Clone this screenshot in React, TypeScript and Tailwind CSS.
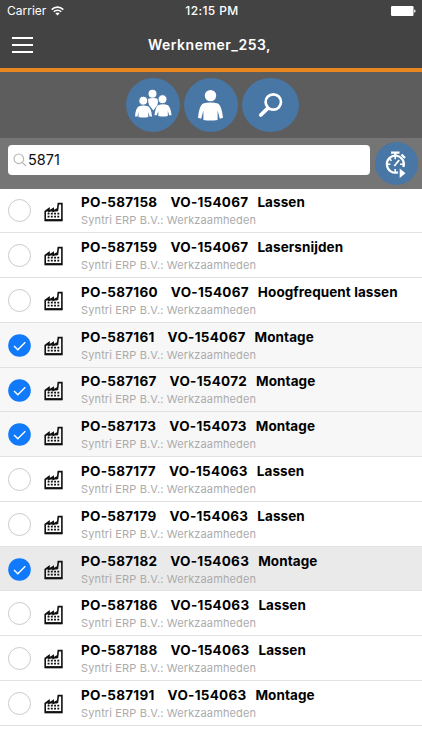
import clsx from "clsx";

type Order = {
    po: string;
    vo: string;
    task: string;
    state?: "selected" | "pressed";
};

const orders: Order[] = [
    { po: "PO-587158", vo: "VO-154067", task: "Lassen" },
    { po: "PO-587159", vo: "VO-154067", task: "Lasersnijden" },
    { po: "PO-587160", vo: "VO-154067", task: "Hoogfrequent lassen" },
    { po: "PO-587161", vo: "VO-154067", task: "Montage", state: "selected" },
    { po: "PO-587167", vo: "VO-154072", task: "Montage", state: "selected" },
    { po: "PO-587173", vo: "VO-154073", task: "Montage", state: "selected" },
    { po: "PO-587177", vo: "VO-154063", task: "Lassen" },
    { po: "PO-587179", vo: "VO-154063", task: "Lassen" },
    { po: "PO-587182", vo: "VO-154063", task: "Montage", state: "pressed" },
    { po: "PO-587186", vo: "VO-154063", task: "Lassen" },
    { po: "PO-587188", vo: "VO-154063", task: "Lassen" },
    { po: "PO-587191", vo: "VO-154063", task: "Montage" },
];

function WifiIcon() {
    return (
        <svg width="13" height="10" viewBox="0 0 13 10" fill="none" stroke="#fff" strokeWidth="1.6">
            <path d="M0.7 3.6C4 0.3 9 0.3 12.3 3.6" />
            <path d="M2.8 5.8C4.9 3.7 8.1 3.7 10.2 5.8" />
            <path d="M6.5 9.6L4.4 7.4C5.6 6.3 7.4 6.3 8.6 7.4Z" fill="#fff" stroke="none" />
        </svg>
    );
}

function BatteryIcon() {
    return (
        <svg width="25" height="10" viewBox="0 0 25 10" fill="#fff">
            <rect width="22.5" height="10" rx="1.2" />
            <path d="M23.2 3.2C25 3.6 25 6.4 23.2 6.8Z" />
        </svg>
    );
}

function GroupIcon() {
    return (
        <svg width="54" height="54" viewBox="0 0 54 54" fill="#fff">
            <circle cx="26.5" cy="15.7" r="4" />
            <path d="M21.5 21Q27 19 32.5 21L31.5 27L27.3 32.5L23 27Z" />
            <g stroke="#4876a5" strokeWidth="1">
                <circle cx="17.3" cy="22.7" r="4.5" />
                <circle cx="36.5" cy="21.2" r="4.5" />
            </g>
            <path d="M12.5 28.5Q17.5 26.5 22.5 28.5Q25.3 30.5 26 38.5H23.7L22.3 34V39Q17.5 40 12.5 39V34L11.5 38.5H9Q9.5 30.5 12.5 28.5Z" />
            <path d="M32 27.2Q37 25.2 42 27.2Q44.8 29.5 45.5 37.3H43.2L41.8 33V38Q37 39 32.3 38V33L30.8 37.3H28.5Q29.2 29.5 32 27.2Z" />
        </svg>
    );
}

function PersonIcon() {
    return (
        <svg width="54" height="54" viewBox="0 0 54 54" fill="#fff">
            <circle cx="26.5" cy="17.6" r="5.7" />
            <path d="M19 25.5Q26.5 23.7 34 25.5Q37.8 28 39 39.7L35.8 40.7L33.6 32.5V42Q26.5 43.2 19.4 42V32.5L17.2 40.7L14 39.7Q15 28 19 25.5Z" />
        </svg>
    );
}

function MagnifierIcon() {
    return (
        <svg width="57" height="54" viewBox="0 0 57 54" fill="none" stroke="#fff">
            <circle cx="31.3" cy="24" r="7.7" strokeWidth="2.7" />
            <path d="M25.6 30.4L18.8 37" strokeWidth="3.8" strokeLinecap="round" />
        </svg>
    );
}

function StopwatchIcon() {
    return (
        <svg width="43" height="43" viewBox="0 0 43 43" fill="none" stroke="#fff">
            <path d="M16 10.7H24.5M20.3 10.7V14M26.5 12.5L30 16" strokeWidth="2.3" />
            <path d="M23 30.3A8.5 8.5 0 1 1 28.4 25" strokeWidth="2.2" />
            <path d="M20.2 13.5V17.3M12 22.3H15.5M25 22.3H28M20.2 27V31M15 17.2L16.5 18.7" strokeWidth="1.6" />
            <path d="M19.3 24L24.2 18" strokeWidth="1.9" />
            <path d="M24.7 26.5L30.5 31.2L24.7 36Z" fill="#fff" stroke="none" />
        </svg>
    );
}

function FactoryIcon() {
    return (
        <svg className="shrink-0" width="20" height="20" viewBox="0 0 20 20" fill="none" stroke="#111">
            <path d="M1.2 18.5V9.3L5 6.6V9.3L9.2 6.6V9.3L13.4 6.6V9L14.3 1.6H17.9V18.5Z" strokeWidth="1.6" />
            <path d="M1.2 9.4L5 6.6V8.6L9.2 6.6V8.6L13.4 6.6V9.4Z" fill="#111" stroke="none" />
            <path d="M3.6 11.7H16M3.6 14.7H16" strokeWidth="1.7" strokeDasharray="1.9 1.35" />
            <path d="M1 18.1H18.2" strokeWidth="2" />
        </svg>
    );
}

function OrderRow({ order }: { order: Order }) {
    return (
        <li
            className={clsx(
                "flex h-[44.78px] items-center border-b border-[#e2e2e2] pl-2",
                order.state === "selected" && "bg-[#f7f7f7]",
                order.state === "pressed" && "bg-[#eaeaea]"
            )}
        >
            {order.state ? (
                <svg className="mt-px shrink-0" width="23" height="23" viewBox="0 0 23 23" fill="none">
                    <circle cx="11.5" cy="11.5" r="11.3" fill="#107afb" />
                    <path d="M6 12L9.8 15.8L17.3 8.2" stroke="#fff" strokeWidth="1.4" />
                </svg>
            ) : (
                <span className="mt-px size-[23px] shrink-0 rounded-full border border-[#cacaca] bg-white" />
            )}
            <div className="ml-[13px] mt-[2.5px]">
                <FactoryIcon />
            </div>
            <div className="ml-[17px] mt-[1.8px] whitespace-nowrap">
                <p className="flex text-[13.5px] font-bold leading-[18px] tracking-[0.27px] text-black">
                    <span>{order.po}</span>
                    <span className="ml-[13px]">{order.vo}</span>
                    <span className="ml-[9px] tracking-[0.08px]">{order.task}</span>
                </p>
                <p className="text-[11px] leading-[18px] tracking-[0.13px] text-[#ababab]">
                    Syntri ERP B.V.: Werkzaamheden
                </p>
            </div>
        </li>
    );
}

export default function App() {
    return (
        <div className="h-[750px] w-[422px] overflow-hidden bg-white font-[Inter,sans-serif]">
            <header className="h-[72px] border-b-[4px] border-[#e8861f] bg-[#434343] text-white">
                <div className="grid h-[22px] grid-cols-3 items-center pl-[7px] pr-[6px] text-[12px]">
                    <div className="flex items-center gap-[5px] tracking-[0px]">
                        <span>Carrier</span>
                        <WifiIcon />
                    </div>
                    <span className="pl-px text-center font-medium tracking-[0.4px]">12:15 PM</span>
                    <div className="flex justify-end">
                        <BatteryIcon />
                    </div>
                </div>
                <div className="grid h-[45px] grid-cols-[60px_1fr_63px] items-center">
                    <button className="ml-3 flex w-[21px] flex-col gap-[5px]" aria-label="Menu">
                        <span className="h-[2px] bg-white" />
                        <span className="h-[2px] bg-white" />
                        <span className="h-[2px] bg-white" />
                    </button>
                    <h1 className="text-center text-[14px] font-semibold tracking-[0.5px]">Werknemer_253,</h1>
                </div>
            </header>

            {/* View buttons */}
            <nav className="flex h-[66px] items-center justify-center gap-1 bg-[#5d5d5d] pl-[2px]">
                <button className="size-[54px] rounded-full bg-[#4876a5]" aria-label="Team">
                    <GroupIcon />
                </button>
                <button className="size-[54px] rounded-full bg-[#4876a5]" aria-label="Employee">
                    <PersonIcon />
                </button>
                <button className="h-[54px] w-[57px] rounded-[50%] bg-[#4876a5]" aria-label="Search">
                    <MagnifierIcon />
                </button>
            </nav>

            {/* Search bar */}
            <div className="flex h-[50.6px] items-center gap-[5px] bg-[#757575] pl-2">
                <div className="mb-[6px] flex h-[30px] w-[362px] items-center gap-px rounded-[4px] bg-white pl-[5px]">
                    <svg width="14" height="14" viewBox="0 0 14 14" fill="none" stroke="#b5b5b5" strokeWidth="1.1">
                        <circle cx="5.8" cy="5.8" r="4.8" />
                        <path d="M9.3 9.3L13 13" />
                    </svg>
                    <span className="text-[14.5px] text-[#111]">5871</span>
                </div>
                <button className="size-[43px] rounded-full bg-[#4876a5]" aria-label="Start timer">
                    <StopwatchIcon />
                </button>
            </div>

            <ul>
                {orders.map((order) => (
                    <OrderRow key={order.po} order={order} />
                ))}
            </ul>
        </div>
    );
}
